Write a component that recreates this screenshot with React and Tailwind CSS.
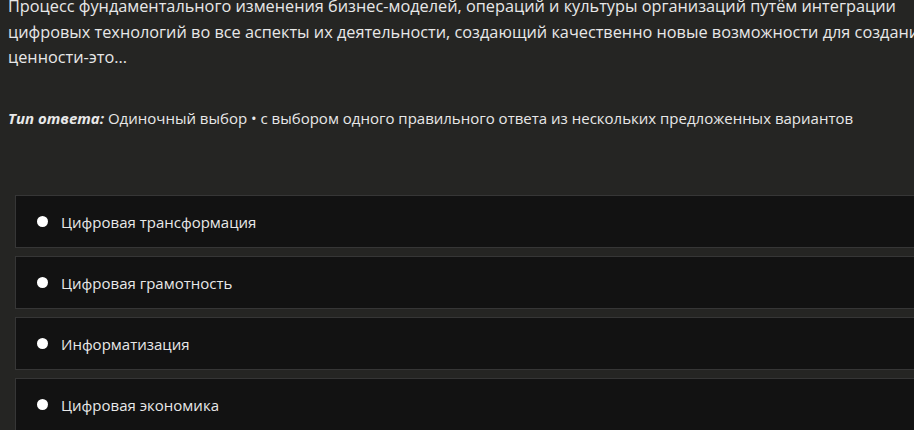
const options = [
  "Цифровая трансформация",
  "Цифровая грамотность",
  "Информатизация",
  "Цифровая экономика",
];

export default function App() {
  return (
    <div
      className="w-[914px] h-[430px] overflow-hidden bg-[#252523] text-[#e8e8e8]"
      style={{ fontFamily: '"Open Sans", "Noto Sans", sans-serif' }}
    >
      <div className="w-[950px] mt-[-6px]">
        <p className="px-2 text-[16.3px] leading-[25.6px]">
          Процесс фундаментального изменения бизнес-моделей, операций и культуры организаций путём интеграции
          цифровых технологий во все аспекты их деятельности, создающий качественно новые возможности для создания
          ценности-это...
        </p>
        <p className="px-2 mt-[35px] text-[15px] leading-[25.6px]">
          <b className="italic font-bold">Тип ответа:</b> Одиночный выбор • с выбором одного правильного ответа из нескольких предложенных вариантов
        </p>
        <div className="mt-[64px] ml-[15px] flex flex-col gap-2">
          {options.map((o) => (
            <label
              key={o}
              className="flex items-center h-[53px] bg-[#121212] border border-[#363636] pl-[21px] gap-[13px] text-[15px]"
            >
              <span className="w-[11px] h-[11px] rounded-full bg-white shrink-0" />
              <span>{o}</span>
            </label>
          ))}
        </div>
      </div>
    </div>
  );
}
